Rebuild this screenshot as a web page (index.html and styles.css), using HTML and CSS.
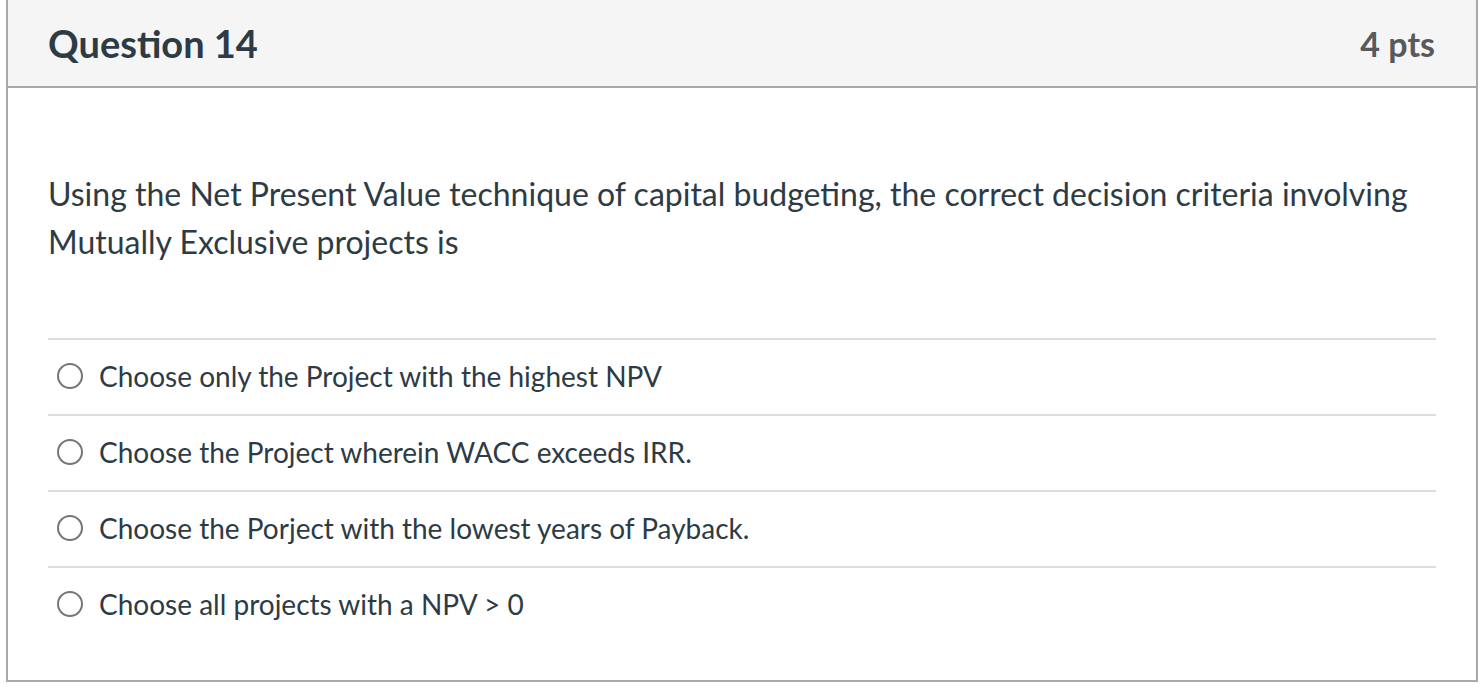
FILE: index.html
```html
<!DOCTYPE html>
<html lang="en">
<head>
<meta charset="utf-8">
<title>Question 14</title>
<link rel="stylesheet" href="styles.css">
</head>
<body>
<div class="page">
  <div class="card">
    <div class="card-header">
      <h2 class="q-title">Question 14</h2>
      <span class="q-points">4 pts</span>
    </div>
    <div class="card-body">
      <p class="q-text">Using the Net Present Value technique of capital budgeting, the correct decision criteria involving Mutually Exclusive projects is</p>
      <div class="answers">
        <label class="answer"><span class="radio"></span><span class="answer-text">Choose only the Project with the highest NPV</span></label>
        <label class="answer"><span class="radio"></span><span class="answer-text">Choose the Project wherein WACC exceeds IRR.</span></label>
        <label class="answer"><span class="radio"></span><span class="answer-text">Choose the Porject with the lowest years of Payback.</span></label>
        <label class="answer"><span class="radio"></span><span class="answer-text">Choose all projects with a NPV &gt; 0</span></label>
      </div>
    </div>
  </div>
</div>
</body>
</html>
```

FILE: styles.css
```css
* { box-sizing: border-box; }
html, body { margin: 0; padding: 0; background: #ffffff; }
body {
  font-family: Lato, "Open Sans", "Liberation Sans", sans-serif;
  color: #2d3b45;
}
.page {
  padding-left: 6px;
  width: 1480px;
}
.card {
  width: 1472px;
  margin-top: -2px;
  border: 2px solid #a9a9a9;
  background: #ffffff;
}
.card-header {
  height: 88px;
  padding: 0 41px 0 40px;
  background: #f5f5f5;
  border-bottom: 2px solid #a9a9a9;
  display: flex;
  align-items: center;
  justify-content: space-between;
}
.q-title {
  margin: 0;
  font-size: 38px;
  font-weight: 700;
  color: #2d3b45;
}
.q-points {
  font-size: 34px;
  font-weight: 700;
  color: #58595b;
}
.card-body {
  padding: 82px 40px 38px 40px;
}
.q-text {
  margin: 0 0 72px 0;
  font-size: 32px;
  line-height: 48px;
}
.answers {
  display: flex;
  flex-direction: column;
}
.answer {
  height: 76px;
  border-top: 2px solid #dddddd;
  display: flex;
  align-items: center;
  padding-left: 9px;
  padding-bottom: 3px;
  gap: 16px;
  font-size: 28px;
}
.radio {
  width: 26px;
  height: 26px;
  border-radius: 50%;
  border: 2px solid #767676;
  flex: none;
  background: #ffffff;
}
.answer-text {
  color: #2d3b45;
}
```
